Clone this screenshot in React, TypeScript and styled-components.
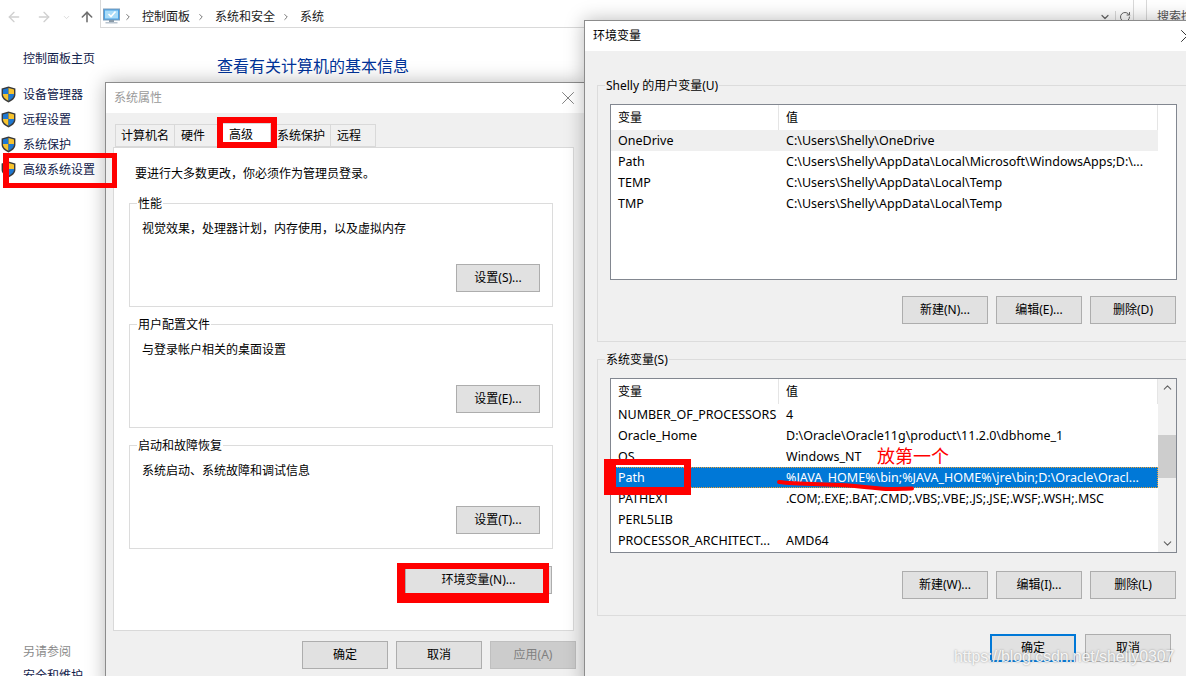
import React from 'react'
import styled, { createGlobalStyle } from 'styled-components'
import { ArrowLeft, ArrowRight, ArrowUp, ChevronDown, ChevronRight, ChevronUp, RotateCw, X } from 'lucide-react'

const GlobalStyle = createGlobalStyle`
  html, body {
    margin: 0;
    padding: 0;
    background: #fff;
  }
  * {
    box-sizing: border-box;
  }
`

const Desktop = styled.div`
  position: relative;
  width: 1186px;
  height: 676px;
  overflow: hidden;
  background: #fff;
  color: #000;
  font: 12px/18px 'Noto Sans', 'Noto Sans CJK SC', sans-serif;
`

const Toolbar = styled.div`
  display: flex;
  align-items: flex-start;
  height: 34px;
`

const NavIcons = styled.div`
  display: flex;
  align-items: center;
  flex: none;
  width: 100px;
  height: 28px;
  padding: 6px 0 0 6px;
`

const NavSlot = styled.span<{ $width: number; $dark?: boolean }>`
  display: flex;
  flex: none;
  width: ${({ $width }) => $width}px;
  color: ${({ $dark }) => ($dark ? '#707070' : '#d0d0d0')};
`

const AddressBar = styled.div`
  display: flex;
  align-items: center;
  flex: none;
  width: 1034px;
  height: 28px;
  padding: 6px 0 0 2px;
  border: 1px solid #d9d9d9;
  border-top: none;
  color: #1a1a1a;
`

const Crumb = styled.span`
  margin: 0 3px 0 9px;
`

const CrumbSep = styled.span`
  display: flex;
  margin-left: 3px;
  color: #777;
`

const AddressTail = styled.div`
  display: flex;
  align-items: center;
  margin-left: auto;
  color: #666;
`

const ClearSlot = styled.span`
  display: flex;
  padding-right: 2px;
`

const RefreshSlot = styled.span`
  display: flex;
  justify-content: center;
  width: 18px;
  margin-left: 2px;
  border-left: 1px solid #d9d9d9;
`

const SearchBox = styled.div`
  flex: none;
  width: 80px;
  height: 28px;
  margin-left: 12px;
  padding: 8px 0 0 10px;
  border: 1px solid #d9d9d9;
  border-top: none;
  color: #555;
  white-space: nowrap;
  overflow: hidden;
`

const ExplorerBody = styled.div`
  display: flex;
`

const Sidebar = styled.nav`
  display: flex;
  flex-direction: column;
  flex: none;
  width: 217px;
  height: 651px;
  padding-top: 16px;
`

const HomeLink = styled.div`
  margin-bottom: 14px;
  padding-left: 23px;
  color: #10204a;
`

const NavRow = styled.div`
  display: flex;
  align-items: center;
  gap: 7px;
  height: 25px;
  padding-left: 1px;
  color: #10204a;
`

const SeeAlso = styled.div`
  display: flex;
  flex-direction: column;
  gap: 6px;
  margin-top: auto;
  padding-left: 23px;
`

const SeeAlsoTitle = styled.span`
  color: #8a8a8a;
`

const SeeAlsoLink = styled.span`
  color: #10204a;
`

const PageHeading = styled.h1`
  margin: 21px 0 0;
  color: #003399;
  font-size: 16px;
  font-weight: 400;
  line-height: 22px;
`

const Dialog = styled.section<{ $left: number; $top: number; $width: number; $height: number }>`
  position: absolute;
  left: ${({ $left }) => $left}px;
  top: ${({ $top }) => $top}px;
  display: flex;
  flex-direction: column;
  width: ${({ $width }) => $width}px;
  height: ${({ $height }) => $height}px;
  background: #f0f0f0;
  border: 1px solid #8c8c8c;
  box-shadow: 0 0 18px rgba(0, 0, 0, 0.28);
`

const TitleBar = styled.header<{ $dim?: boolean }>`
  display: flex;
  align-items: center;
  justify-content: space-between;
  flex: none;
  height: 30px;
  padding: 0 5px 0 8px;
  background: #fff;
  color: ${({ $dim }) => ($dim ? '#9a9a9a' : '#000')};
`

const TabStrip = styled.div`
  display: flex;
  align-items: flex-end;
  flex: none;
  height: 34px;
  padding-left: 9px;
`

const Tab = styled.div<{ $width: number; $active?: boolean }>`
  width: ${({ $width }) => $width}px;
  height: ${({ $active }) => ($active ? 25 : 23)}px;
  margin-bottom: ${({ $active }) => ($active ? -1 : 0)}px;
  padding: 2px 0 0 ${({ $active }) => ($active ? 9 : 6)}px;
  background: ${({ $active }) => ($active ? '#fff' : '#f0f0f0')};
  border: 1px solid #d9d9d9;
  border-bottom: ${({ $active }) => ($active ? 'none' : '1px solid #d9d9d9')};
  border-left-width: ${({ $active }) => ($active ? 1 : 0)}px;
  white-space: nowrap;
  &:first-child {
    padding-left: 5px;
    border-left-width: 1px;
  }
`

const TabPanel = styled.div`
  flex: none;
  width: 461px;
  height: 484px;
  margin-left: 7px;
  padding: 17px 20px 0 15px;
  background: #fff;
  border: 1px solid #d9d9d9;
`

const Notice = styled.p`
  margin: 0 0 20px 6px;
`

const GroupBox = styled.div<{ $bg: string; $width: number; $height: number }>`
  position: relative;
  display: flex;
  flex-direction: column;
  width: ${({ $width }) => $width}px;
  height: ${({ $height }) => $height}px;
  border: 1px solid #dcdcdc;
  background: ${({ $bg }) => $bg};
`

const Legend = styled.span<{ $bg: string }>`
  position: absolute;
  left: 7px;
  top: -9px;
  padding: 0 1px;
  background: ${({ $bg }) => $bg};
`

const SettingsGroup = styled(GroupBox)`
  justify-content: space-between;
  margin-bottom: 17px;
  padding: 16px 12px 14px 12px;
`

const Description = styled.span``

const VariablesGroup = styled(GroupBox)<{ $top?: number }>`
  margin: ${({ $top }) => $top ?? 0}px 0 17px 12px;
  padding: 18px 0 0 12px;
`

const Button = styled.button<{ $width?: number; $primary?: boolean }>`
  flex: none;
  width: ${({ $width }) => $width ?? 86}px;
  height: 28px;
  padding: 0;
  background: #e1e1e1;
  border: ${({ $primary }) => ($primary ? '2px solid #0078d7' : '1px solid #adadad')};
  border-radius: 0;
  color: #000;
  font: inherit;
  &:disabled {
    background: #cccccc;
    border-color: #bfbfbf;
    color: #808080;
  }
`

const ButtonEnd = styled.div`
  display: flex;
  justify-content: flex-end;
`

const EnvRow = styled(ButtonEnd)`
  width: 423px;
`

const ButtonRow = styled.div<{ $top: number }>`
  display: flex;
  justify-content: flex-end;
  gap: 8px;
  width: 566px;
  margin-top: ${({ $top }) => $top}px;
`

const DialogFooter = styled.div`
  display: flex;
  justify-content: flex-end;
  gap: 8px;
  width: 470px;
  margin-top: 10px;
`

const EnvFooter = styled.div`
  display: flex;
  gap: 9px;
  margin-top: 1px;
  padding-left: 405px;
`

const ListFrame = styled.div<{ $height: number }>`
  display: flex;
  width: 567px;
  height: ${({ $height }) => $height}px;
  background: #fff;
  border: 1px solid #828790;
`

const ListBody = styled.div`
  flex: none;
  width: 547px;
`

const ListHeader = styled.div`
  display: grid;
  grid-template-columns: 168px 1fr;
  height: 25px;
`

const HeaderCell = styled.div`
  padding: 4px 0 0 7px;
  border-right: 1px solid #e5e5e5;
`

const ListRow = styled.div<{ $state?: 'selected' | 'inactive' }>`
  display: grid;
  grid-template-columns: 168px 1fr;
  height: 21px;
  font-size: 12.5px;
  line-height: 22px;
  white-space: nowrap;
  background: ${({ $state }) =>
    $state === 'selected' ? '#0078d7' : $state === 'inactive' ? '#efefef' : 'transparent'};
  color: ${({ $state }) => ($state === 'selected' ? '#fff' : '#000')};
  outline: ${({ $state }) => ($state === 'selected' ? '1px dotted #f0a030' : 'none')};
  outline-offset: -1px;
`

const ListCell = styled.span`
  padding-left: 7px;
  overflow: hidden;
`

const Scrollbar = styled.div`
  display: flex;
  flex-direction: column;
  flex: 1;
  background: #f0f0f0;
`

const ScrollArrow = styled.div`
  display: flex;
  align-items: center;
  justify-content: center;
  flex: none;
  height: 17px;
  color: #606060;
`

const ScrollTrack = styled.div`
  flex: 1;
  padding-top: 39px;
`

const ScrollThumb = styled.div`
  height: 43px;
  background: #cdcdcd;
`

const RedBox = styled.div<{ $x: number; $y: number; $w: number; $h: number; $edges: string }>`
  position: absolute;
  left: ${({ $x }) => $x}px;
  top: ${({ $y }) => $y}px;
  width: ${({ $w }) => $w}px;
  height: ${({ $h }) => $h}px;
  border-style: solid;
  border-color: #ff0000;
  border-width: ${({ $edges }) => $edges};
`

const Scribble = styled.svg`
  position: absolute;
  left: 770px;
  top: 474px;
`

const RedNote = styled.span`
  position: absolute;
  left: 877px;
  top: 445px;
  color: #ff0000;
  font: 18px/24px 'Liberation Serif', 'Noto Sans CJK SC', serif;
`

const Watermark = styled.span`
  position: absolute;
  left: 954px;
  top: 647px;
  color: rgba(255, 255, 255, 0.9);
  font: 16px/20px 'Liberation Sans', sans-serif;
  letter-spacing: -0.12px;
  text-shadow: 0 0 2px rgba(120, 120, 120, 0.8);
`

const Shield = () => (
  <svg width="15" height="17" viewBox="0 0 15 17">
    <path d="M7.5 0.6 L14.4 2.6 V8.6 C14.4 12.4 11 15.2 7.5 16.4 C4 15.2 0.6 12.4 0.6 8.6 V2.6 Z" fill="#3a3a3a" />
    <path d="M7.5 2 L2 3.5 V8 H7.5 Z" fill="#1e78d2" />
    <path d="M7.5 2 L13 3.5 V8 H7.5 Z" fill="#f7c32e" />
    <path d="M2 8 H7.5 V14.8 C5 13.8 2 11.6 2 8.6 Z" fill="#f7c32e" />
    <path d="M13 8 H7.5 V14.8 C10 13.8 13 11.6 13 8.6 Z" fill="#1e78d2" />
  </svg>
)

const ComputerIcon = () => (
  <svg width="17" height="17" viewBox="0 0 17 17">
    <rect x="0.5" y="1" width="16" height="11" fill="#4aa3e6" stroke="#7f9db9" />
    <rect x="2" y="2.5" width="13" height="8" fill="#a9dcf8" />
    <path d="M5.5 6 L8 8.5 L12.5 3.5" fill="none" stroke="#fff" strokeWidth="1.6" />
    <rect x="6" y="12" width="5" height="2" fill="#8a9aa8" />
    <rect x="2.5" y="14" width="12" height="1.5" fill="#b8c4cf" />
  </svg>
)

type Variable = [string, string, ('selected' | 'inactive')?]

const userVariables: Variable[] = [
  ['OneDrive', 'C:\\Users\\Shelly\\OneDrive', 'inactive'],
  ['Path', 'C:\\Users\\Shelly\\AppData\\Local\\Microsoft\\WindowsApps;D:\\...'],
  ['TEMP', 'C:\\Users\\Shelly\\AppData\\Local\\Temp'],
  ['TMP', 'C:\\Users\\Shelly\\AppData\\Local\\Temp'],
]

const systemVariables: Variable[] = [
  ['NUMBER_OF_PROCESSORS', '4'],
  ['Oracle_Home', 'D:\\Oracle\\Oracle11g\\product\\11.2.0\\dbhome_1'],
  ['OS', 'Windows_NT'],
  ['Path', '%JAVA_HOME%\\bin;%JAVA_HOME%\\jre\\bin;D:\\Oracle\\Oracl...', 'selected'],
  ['PATHEXT', '.COM;.EXE;.BAT;.CMD;.VBS;.VBE;.JS;.JSE;.WSF;.WSH;.MSC'],
  ['PERL5LIB', ''],
  ['PROCESSOR_ARCHITECT...', 'AMD64'],
]

const VariableList: React.FC<{ rows: Variable[]; height: number; scroll?: boolean }> = ({ rows, height, scroll }) => (
  <ListFrame $height={height}>
    <ListBody>
      <ListHeader>
        <HeaderCell>变量</HeaderCell>
        <HeaderCell>值</HeaderCell>
      </ListHeader>
      {rows.map(([name, value, state]) => (
        <ListRow key={name} $state={state}>
          <ListCell>{name}</ListCell>
          <ListCell>{value}</ListCell>
        </ListRow>
      ))}
    </ListBody>
    {scroll && (
      <Scrollbar>
        <ScrollArrow>
          <ChevronUp size={13} strokeWidth={2} />
        </ScrollArrow>
        <ScrollTrack>
          <ScrollThumb />
        </ScrollTrack>
        <ScrollArrow>
          <ChevronDown size={13} strokeWidth={2} />
        </ScrollArrow>
      </Scrollbar>
    )}
  </ListFrame>
)

const sidebarItems = ['设备管理器', '远程设置', '系统保护', '高级系统设置']

const settingsGroups = [
  { title: '性能', text: '视觉效果，处理器计划，内存使用，以及虚拟内存', action: '设置(S)...' },
  { title: '用户配置文件', text: '与登录帐户相关的桌面设置', action: '设置(E)...' },
  { title: '启动和故障恢复', text: '系统启动、系统故障和调试信息', action: '设置(T)...' },
]

const App: React.FC = () => {
  return (
    <Desktop>
      <GlobalStyle />
      <Toolbar>
        <NavIcons>
          <NavSlot $width={30}>
            <ArrowLeft size={16} strokeWidth={2} />
          </NavSlot>
          <NavSlot $width={26}>
            <ArrowRight size={16} strokeWidth={2} />
          </NavSlot>
          <NavSlot $width={17}>
            <ChevronDown size={9} strokeWidth={2} />
          </NavSlot>
          <NavSlot $width={16} $dark>
            <ArrowUp size={16} strokeWidth={2.4} />
          </NavSlot>
        </NavIcons>
        <AddressBar>
          <ComputerIcon />
          <CrumbSep>
            <ChevronRight size={10} strokeWidth={2.4} />
          </CrumbSep>
          <Crumb>控制面板</Crumb>
          <CrumbSep>
            <ChevronRight size={10} strokeWidth={2.4} />
          </CrumbSep>
          <Crumb>系统和安全</Crumb>
          <CrumbSep>
            <ChevronRight size={10} strokeWidth={2.4} />
          </CrumbSep>
          <Crumb>系统</Crumb>
          <AddressTail>
            <ClearSlot>
              <ChevronDown size={12} strokeWidth={2.4} />
            </ClearSlot>
            <RefreshSlot>
              <RotateCw size={12} strokeWidth={2} />
            </RefreshSlot>
          </AddressTail>
        </AddressBar>
        <SearchBox>搜索控制面板</SearchBox>
      </Toolbar>

      <ExplorerBody>
        <Sidebar>
          <HomeLink>控制面板主页</HomeLink>
          {sidebarItems.map((item) => (
            <NavRow key={item}>
              <Shield />
              {item}
            </NavRow>
          ))}
          <SeeAlso>
            <SeeAlsoTitle>另请参阅</SeeAlsoTitle>
            <SeeAlsoLink>安全和维护</SeeAlsoLink>
          </SeeAlso>
        </Sidebar>
        <PageHeading>查看有关计算机的基本信息</PageHeading>
      </ExplorerBody>

      <Dialog $left={105} $top={82} $width={480} $height={610}>
        <TitleBar $dim>
          系统属性
          <X size={22} strokeWidth={1} color="#777" />
        </TitleBar>
        <TabStrip>
          <Tab $width={60}>计算机名</Tab>
          <Tab $width={44}>硬件</Tab>
          <Tab $width={52} $active>
            高级
          </Tab>
          <Tab $width={60}>系统保护</Tab>
          <Tab $width={45}>远程</Tab>
        </TabStrip>
        <TabPanel>
          <Notice>要进行大多数更改，你必须作为管理员登录。</Notice>
          {settingsGroups.map((group) => (
            <SettingsGroup key={group.title} $bg="#fff" $width={424} $height={104}>
              <Legend $bg="#fff">{group.title}</Legend>
              <Description>{group.text}</Description>
              <ButtonEnd>
                <Button $width={84}>{group.action}</Button>
              </ButtonEnd>
            </SettingsGroup>
          ))}
          <EnvRow>
            <Button $width={147}>环境变量(N)...</Button>
          </EnvRow>
        </TabPanel>
        <DialogFooter>
          <Button>确定</Button>
          <Button>取消</Button>
          <Button disabled>应用(A)</Button>
        </DialogFooter>
      </Dialog>

      <Dialog $left={584} $top={20} $width={620} $height={670}>
        <TitleBar>
          环境变量
          <X size={22} strokeWidth={1} color="#222" />
        </TitleBar>
        <VariablesGroup $bg="#f0f0f0" $width={640} $height={257} $top={34}>
          <Legend $bg="#f0f0f0">Shelly 的用户变量(U)</Legend>
          <VariableList rows={userVariables} height={176} />
          <ButtonRow $top={16}>
            <Button>新建(N)...</Button>
            <Button>编辑(E)...</Button>
            <Button>删除(D)</Button>
          </ButtonRow>
        </VariablesGroup>
        <VariablesGroup $bg="#f0f0f0" $width={640} $height={257}>
          <Legend $bg="#f0f0f0">系统变量(S)</Legend>
          <VariableList rows={systemVariables} height={175} scroll />
          <ButtonRow $top={18}>
            <Button>新建(W)...</Button>
            <Button>编辑(I)...</Button>
            <Button>删除(L)</Button>
          </ButtonRow>
        </VariablesGroup>
        <EnvFooter>
          <Button $primary>确定</Button>
          <Button>取消</Button>
        </EnvFooter>
      </Dialog>

      <RedBox $x={3} $y={153} $w={114} $h={35} $edges="5px 5px 5px 6px" />
      <RedBox $x={217} $y={117} $w={60} $h={31} $edges="6px" />
      <RedBox $x={397} $y={563} $w={152} $h={40} $edges="6px 6px 10px 8px" />
      <RedBox $x={604} $y={459} $w={87} $h={36} $edges="6px 7px 8px 12px" />
      <Scribble width="150" height="22" viewBox="0 0 150 22">
        <path
          d="M9 8 C24 10 48 10 70 11 C90 12 100 14 116 15 C125 15.500 135 14.500 142 14.500"
          fill="none"
          stroke="#ff0000"
          strokeWidth="4"
          strokeLinecap="round"
        />
      </Scribble>
      <RedNote>放第一个</RedNote>
      <Watermark>https://blog.csdn.net/shelly0307</Watermark>
    </Desktop>
  )
}

export default App
